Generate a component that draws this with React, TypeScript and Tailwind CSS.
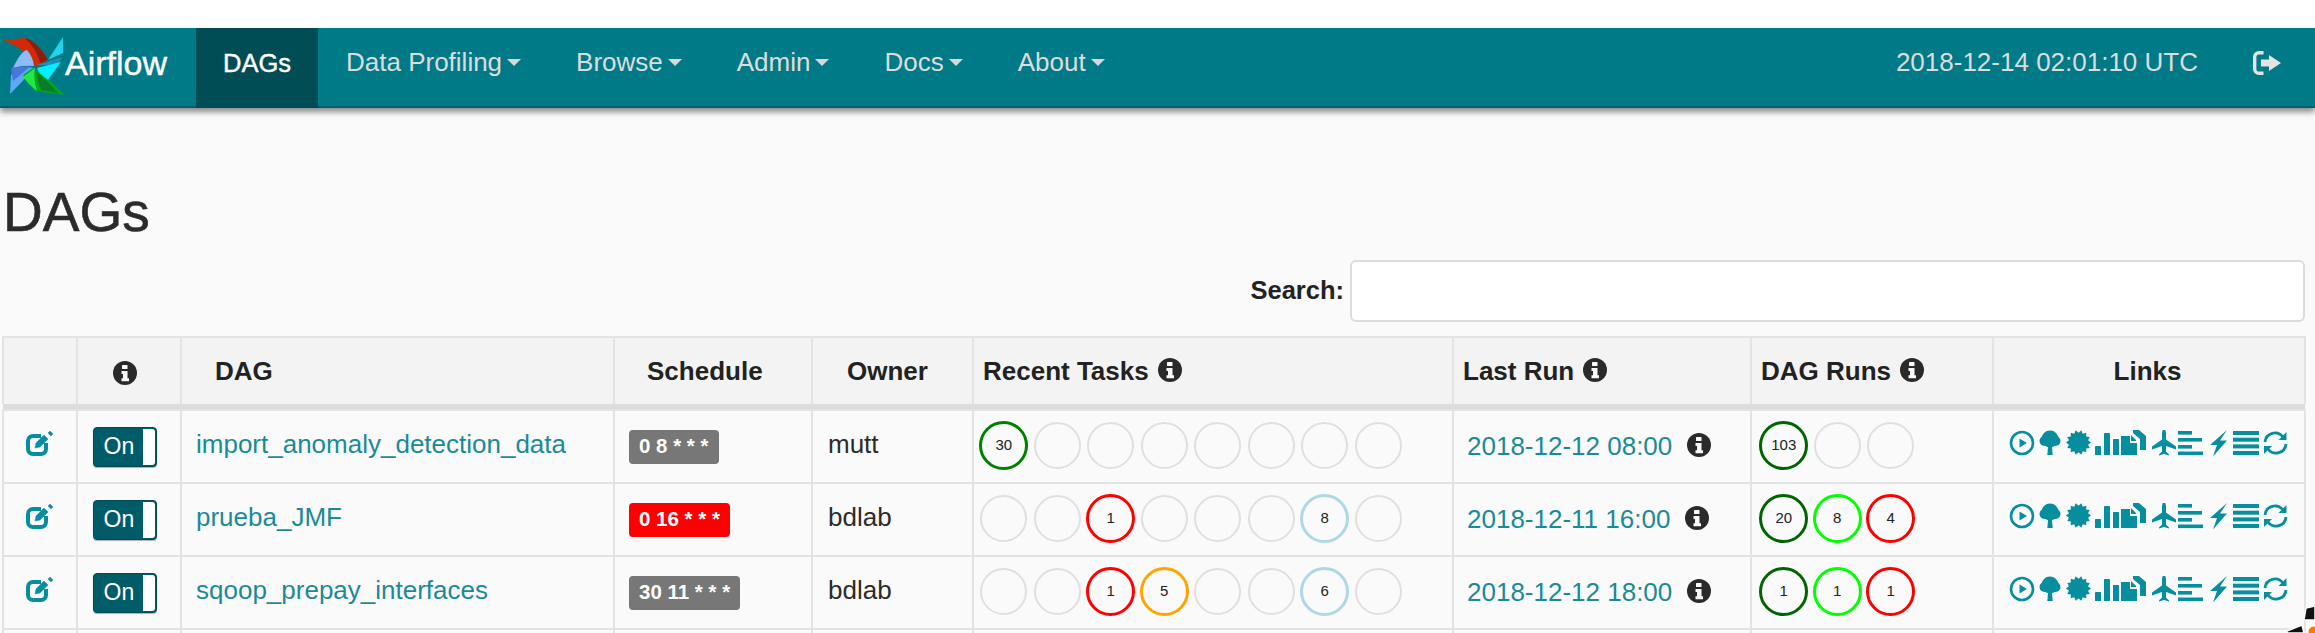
import React from "react";

const FONT = "font-['Liberation_Sans',Arial,sans-serif]";

function Info({ className = "" }: { className?: string }) {
  return (
    <svg viewBox="0 0 24 24" className={"inline-block w-[24px] h-[24px] " + className}>
      <circle cx="12" cy="12" r="12" fill="#2a2a2a" />
      <rect x="9" y="4" width="5.5" height="4" rx="0.6" fill="#fafafa" />
      <path d="M8.5 10h6v7.2h1.5v3H8.5v-3H10v-4.2H8.5z" fill="#fafafa" />
    </svg>
  );
}

function Logo() {
  return (
    <svg viewBox="0 0 62 62" className="w-[62px] h-[62px] shrink-0">
      <path d="M0 5 L22 3 Q34 6 45 25 L36 32 L31 30 Q24 14 0 5Z" fill="#d42a02" />
      <path d="M22 3 Q34 6 45 25 L38 30 Q34 14 22 3Z" fill="#8a1f10" />
      <path d="M32 31 L45 25 L60 2 L60 18 Q46 24 32 31Z" fill="#1fd4ee" />
      <path d="M33 30 L60 22 L52 32 Q42 30 33 30Z" fill="#1b8fb8" />
      <path d="M34 33 L58 27 L44 46 L38 42Z" fill="#00f0ff" />
      <path d="M31 33 Q20 30 8 40 L7 59 Q22 44 31 33Z" fill="#5aaaf5" />
      <path d="M10 33 Q18 16 24 15 Q30 22 31 31 Q20 30 10 33Z" fill="#8fbaf5" />
      <path d="M8 33 L28 31 L10 46Z" fill="#4a74e0" />
      <path d="M30 33 L20 40 L32 56 L62 60 L44 44 Z" fill="#00a81c" />
      <path d="M32 33 L20 42 Q26 50 34 56 Q30 44 32 33Z" fill="#1ee84a" />
      <path d="M33 36 L44 46 L55 58 L38 55 Q34 46 33 36Z" fill="#0a7c24" />
    </svg>
  );
}

const C = "#078e9e";

function Edit() {
  return (
    <svg viewBox="0 0 28 26" className="w-[28px] h-[26px]" fill="none" stroke={C}>
      <path d="M20 13v6a5 5 0 0 1-5 5H7a5 5 0 0 1-5-5V11a5 5 0 0 1 5-5h8" strokeWidth="4" />
      <path d="M9 18l1-5 8-8 4 4-8 8z" fill={C} strokeWidth="0.5" />
      <path d="M22 3l2-2 3 3-2 2z" fill={C} strokeWidth="0.5" />
    </svg>
  );
}

function Toggle() {
  return (
    <div className="w-[64px] h-[40px] rounded-[4px] bg-[#005c68] border border-[#004a54] flex items-center relative shadow-[0_1px_1px_rgba(0,0,0,0.3)]">
      <span className="text-white text-[23px] pl-[10px] leading-none">On</span>
      <span className="absolute right-[1px] top-[1px] bottom-[1px] w-[12px] bg-white rounded-r-[3px]" />
    </div>
  );
}

function Sched({ text, red }: { text: string; red?: boolean }) {
  return (
    <span
      className={
        "inline-flex items-center h-[34px] px-[10px] rounded-[4px] text-white font-bold text-[20.500px] leading-none whitespace-pre " +
        (red ? "bg-[#ff0000]" : "bg-[#777777]")
      }
    >
      {text}
    </span>
  );
}

type Ci = [string | null, string?];

function Circle({ c }: { c: Ci }) {
  const [color, label] = c;
  return (
    <div className="w-[53.5px] h-[50px] shrink-0 flex items-center justify-center">
      {color ? (
        <div
          className="w-[49px] h-[49px] rounded-full border-[3px] flex items-center justify-center text-[15px] text-[#222]"
          style={{ borderColor: color }}
        >
          {label}
        </div>
      ) : (
        <div className="w-[47px] h-[47px] rounded-full border-2 border-[#e0e0e0]" />
      )}
    </div>
  );
}

const G: Ci = [null];
const rows: {
  name: string;
  sched: string;
  red?: boolean;
  owner: string;
  tasks: Ci[];
  last: string;
  runs: Ci[];
}[] = [
  {
    name: "import_anomaly_detection_data",
    sched: "0 8 * * *",
    owner: "mutt",
    tasks: [["#008000", "30"], G, G, G, G, G, G, G],
    last: "2018-12-12 08:00",
    runs: [["#006400", "103"], G, G],
  },
  {
    name: "prueba_JMF",
    sched: "0 16 * * *",
    red: true,
    owner: "bdlab",
    tasks: [G, G, ["#ff0000", "1"], G, G, G, ["#add8e6", "8"], G],
    last: "2018-12-11 16:00",
    runs: [["#006400", "20"], ["#00ff00", "8"], ["#ff0000", "4"]],
  },
  {
    name: "sqoop_prepay_interfaces",
    sched: "30 11 * * *",
    owner: "bdlab",
    tasks: [G, G, ["#ff0000", "1"], ["#ffa500", "5"], G, G, ["#add8e6", "6"], G],
    last: "2018-12-12 18:00",
    runs: [["#006400", "1"], ["#00ff00", "1"], ["#ff0000", "1"]],
  },
];

const starPoints = Array.from({ length: 28 })
  .map((_, i) => {
    const r = i % 2 === 0 ? 12.5 : 9.8;
    const a = (i / 28) * Math.PI * 2;
    return `${(12.5 + r * Math.cos(a)).toFixed(2)},${(12.5 + r * Math.sin(a)).toFixed(2)}`;
  })
  .join(" ");

function Links() {
  return (
    <svg viewBox="0 0 280 26" className="w-[280px] h-[26px]" fill={C}>
      {/* play-circle */}
      <circle cx="13" cy="13" r="11" fill="none" stroke={C} strokeWidth="2.6" />
      <path d="M10.500 8.500l7.500 4.500-7.500 4.500z" />
      {/* tree */}
      <g transform="translate(30 0)">
        <circle cx="11" cy="9" r="8.500" />
        <circle cx="5.500" cy="11" r="5" />
        <circle cx="16.500" cy="11" r="5" />
        <path d="M9.300 14h3.400l1 11H8.300z" />
      </g>
      {/* certificate */}
      <g transform="translate(57 0)">
        <polygon points={starPoints} />
      </g>
      {/* bar chart */}
      <g transform="translate(86 0)">
        <rect x="0" y="16" width="6" height="9" rx="0.6" />
        <rect x="9" y="3" width="6" height="22" rx="0.6" />
        <rect x="18" y="9" width="6" height="16" rx="0.6" />
      </g>
      {/* duplicate files */}
      <g transform="translate(112 0)">
        <path d="M0 6h9v7h7v12H0z" />
        <path d="M10 5l5 5v1h-5z" />
        <path d="M12 0h6l7 6v14h-6V9l-7-6z" />
      </g>
      {/* plane */}
      <g transform="translate(143 -1)">
        <path d="M12 0c1.300 0 2 2.500 2 4.500v6l10 7v3l-10-3.500v5.500l3 3v1l-5-1.500-5 1.500v-1l3-3V17L0 20.500v-3l10-7v-6C10 2.500 10.700 0 12 0z" />
      </g>
      {/* align-left */}
      <g transform="translate(169 1)">
        <rect x="0" y="0" width="14" height="3.600" />
        <rect x="0" y="7" width="24" height="3.600" />
        <rect x="0" y="14" width="14" height="3.600" />
        <rect x="0" y="20.500" width="25" height="3.600" />
      </g>
      {/* flash */}
      <g transform="translate(201 0)">
        <path d="M17 0L10 10.500h7L3 26.500 7 15H0z" />
      </g>
      {/* align-justify */}
      <g transform="translate(224 1)">
        <rect x="0" y="0" width="26" height="4" />
        <rect x="0" y="6.700" width="26" height="4" />
        <rect x="0" y="13.400" width="26" height="4" />
        <rect x="0" y="20" width="26" height="4" />
      </g>
      {/* refresh */}
      <g transform="translate(254 0)" fill="none" stroke={C} strokeWidth="2.800">
        <path d="M2 12a10 10 0 0 1 18-5" />
        <path d="M23 14a10 10 0 0 1-18 5" />
        <path d="M23.500 2v8h-8z" fill={C} stroke="none" />
        <path d="M1 24v-8h8z" fill={C} stroke="none" />
      </g>
    </svg>
  );
}

const NAV = ["Data Profiling", "Browse", "Admin", "Docs", "About"];

function Caret() {
  return (
    <span className="inline-block ml-[5px] align-middle w-0 h-0 border-x-[7px] border-x-transparent border-t-[7px] border-t-[#d8d8d8]" />
  );
}

export default function App() {
  const th = "border-2 border-[#e3e3e3] border-b-0 h-[67px] text-[26px] font-bold text-[#222] bg-[#f3f3f3] align-middle";
  const td = "border-2 border-[#e3e3e3] align-middle p-0";
  return (
    <div className={"relative w-[2315px] h-[633px] overflow-hidden bg-white flex flex-col " + FONT}>
      <div className="h-[28px] shrink-0 bg-white" />
      <nav className="h-[80px] shrink-0 bg-[#007a87] border-b-2 border-b-[#00606a] flex items-stretch shadow-[0_4px_6px_rgba(0,0,0,0.45)] relative z-10">
        <div className="w-[196px] flex items-center pl-[3px] pb-[2px]">
          <Logo />
          <span className="text-white text-[34px] leading-none mb-[6px] [-webkit-text-stroke:0.4px_white]">Airflow</span>
        </div>
        <div className="w-[122px] bg-[#004d55] flex items-center justify-center text-white text-[25.500px] mb-[-2px] [-webkit-text-stroke:0.4px_white]">
          <span className="mb-[10px]">DAGs</span>
        </div>
        {NAV.map((n, i) => (
          <div
            key={n}
            className={"flex items-center text-[#dcdcdc] text-[26px] pb-[10px] " + (i === 0 ? "pl-[28px]" : "pl-[55px]")}
          >
            {n}
            <Caret />
          </div>
        ))}
        <div className="ml-auto flex items-center text-[#dcdcdc] text-[26px] pb-[9px] pr-[34px]">
          <span>2018-12-14 02:01:10 UTC</span>
          <svg viewBox="0 0 28 24" className="w-[28px] h-[24px] ml-[55px]" fill="#e4e4e4">
            <path d="M9 0h1.500v3.400H6A2.600 2.600 0 0 0 3.400 6v12A2.600 2.600 0 0 0 6 20.600h4.500V24H6a6 6 0 0 1-6-6V6a6 6 0 0 1 6-6z" />
            <path d="M16 4l12 8-12 8v-4.600H8V8.600h8z" />
          </svg>
        </div>
      </nav>
      <main className="flex-1 min-h-0 bg-[#fafafa] overflow-hidden">
        <h1 className="text-[55px] leading-none text-[#2b2b2b] pl-[3px] pt-[77px] [-webkit-text-stroke:0.6px_#2b2b2b]">DAGs</h1>
        <div className="flex items-center justify-end pr-[10px] mt-[20px] h-[62px]">
          <span className="font-bold text-[25.500px] text-[#222] mr-[6px] mb-[2px]">Search:</span>
          <div className="w-[955px] h-[62px] rounded-[6px] bg-white border-2 border-[#dcdcdc]" />
        </div>
        <table className="table-fixed border-collapse w-[2302px] ml-[2px] mt-[14px]">
          <colgroup>
            <col className="w-[74px]" />
            <col className="w-[104px]" />
            <col className="w-[433px]" />
            <col className="w-[198px]" />
            <col className="w-[161px]" />
            <col className="w-[480px]" />
            <col className="w-[298px]" />
            <col className="w-[242px]" />
            <col className="w-[312px]" />
          </colgroup>
          <thead>
            <tr>
              <th className={th} />
              <th className={th + " text-center pr-[8px]"}>
                <Info />
              </th>
              <th className={th + " text-left pl-[33px]"}>DAG</th>
              <th className={th + " text-left pl-[32px]"}>Schedule</th>
              <th className={th + " text-center pr-[10px]"}>Owner</th>
              <th className={th + " text-left pl-[9px]"}>
                Recent Tasks <Info className="align-[-2px] ml-[2px]" />
              </th>
              <th className={th + " text-left pl-[9px]"}>
                Last Run <Info className="align-[-2px] ml-[2px]" />
              </th>
              <th className={th + " text-left pl-[9px]"}>
                DAG Runs <Info className="align-[-2px] ml-[2px]" />
              </th>
              <th className={th + " text-center pr-[3px]"}>Links</th>
            </tr>
            <tr>
              <th colSpan={9} className="h-[6px] p-0 bg-[#dcdcdc]" />
            </tr>
          </thead>
          <tbody>
            {rows.map((r) => (
              <tr key={r.name} className="h-[73px]">
                <td className={td}>
                  <div className="flex justify-center pb-[8px]">
                    <Edit />
                  </div>
                </td>
                <td className={td}>
                  <div className="flex justify-center pr-[9px]">
                    <Toggle />
                  </div>
                </td>
                <td className={td + " pl-[14px] pb-[4px] text-[26px] text-[#1a8a98]"}>{r.name}</td>
                <td className={td + " pl-[14px]"}>
                  <Sched text={r.sched} red={r.red} />
                </td>
                <td className={td + " pl-[15px] pb-[4px] text-[26px] text-[#2b2b2b]"}>{r.owner}</td>
                <td className={td}>
                  <div className="flex pl-[3px] pb-[2px]">
                    {r.tasks.map((c, i) => (
                      <Circle key={i} c={c} />
                    ))}
                  </div>
                </td>
                <td className={td + " pl-[13px] text-[26px] text-[#1a8a98]"}>
                  <div className="flex items-center">
                    <span>{r.last}</span>
                    <Info className="ml-[15px] mb-[4px]" />
                  </div>
                </td>
                <td className={td}>
                  <div className="flex pl-[5px] pb-[2px]">
                    {r.runs.map((c, i) => (
                      <Circle key={i} c={c} />
                    ))}
                  </div>
                </td>
                <td className={td}>
                  <div className="flex pl-[15px] pb-[8px]">
                    <Links />
                  </div>
                </td>
              </tr>
            ))}
            <tr className="h-[20px]">
              {Array.from({ length: 9 }).map((_, i) => (
                <td key={i} className={td} />
              ))}
            </tr>
          </tbody>
        </table>
      </main>
      <svg viewBox="0 0 28 26" className="absolute right-0 bottom-0 w-[28px] h-[26px]">
        <path d="M19 1L28 -1V13H17z" fill="#111" stroke="#fff" strokeWidth="1.500" />
        <path d="M0 24L15 18L17 26H0z" fill="#111" stroke="#fff" strokeWidth="1.500" />
        <circle cx="27" cy="25" r="6" fill="#f57c00" stroke="#fff" strokeWidth="1" />
      </svg>
    </div>
  );
}
